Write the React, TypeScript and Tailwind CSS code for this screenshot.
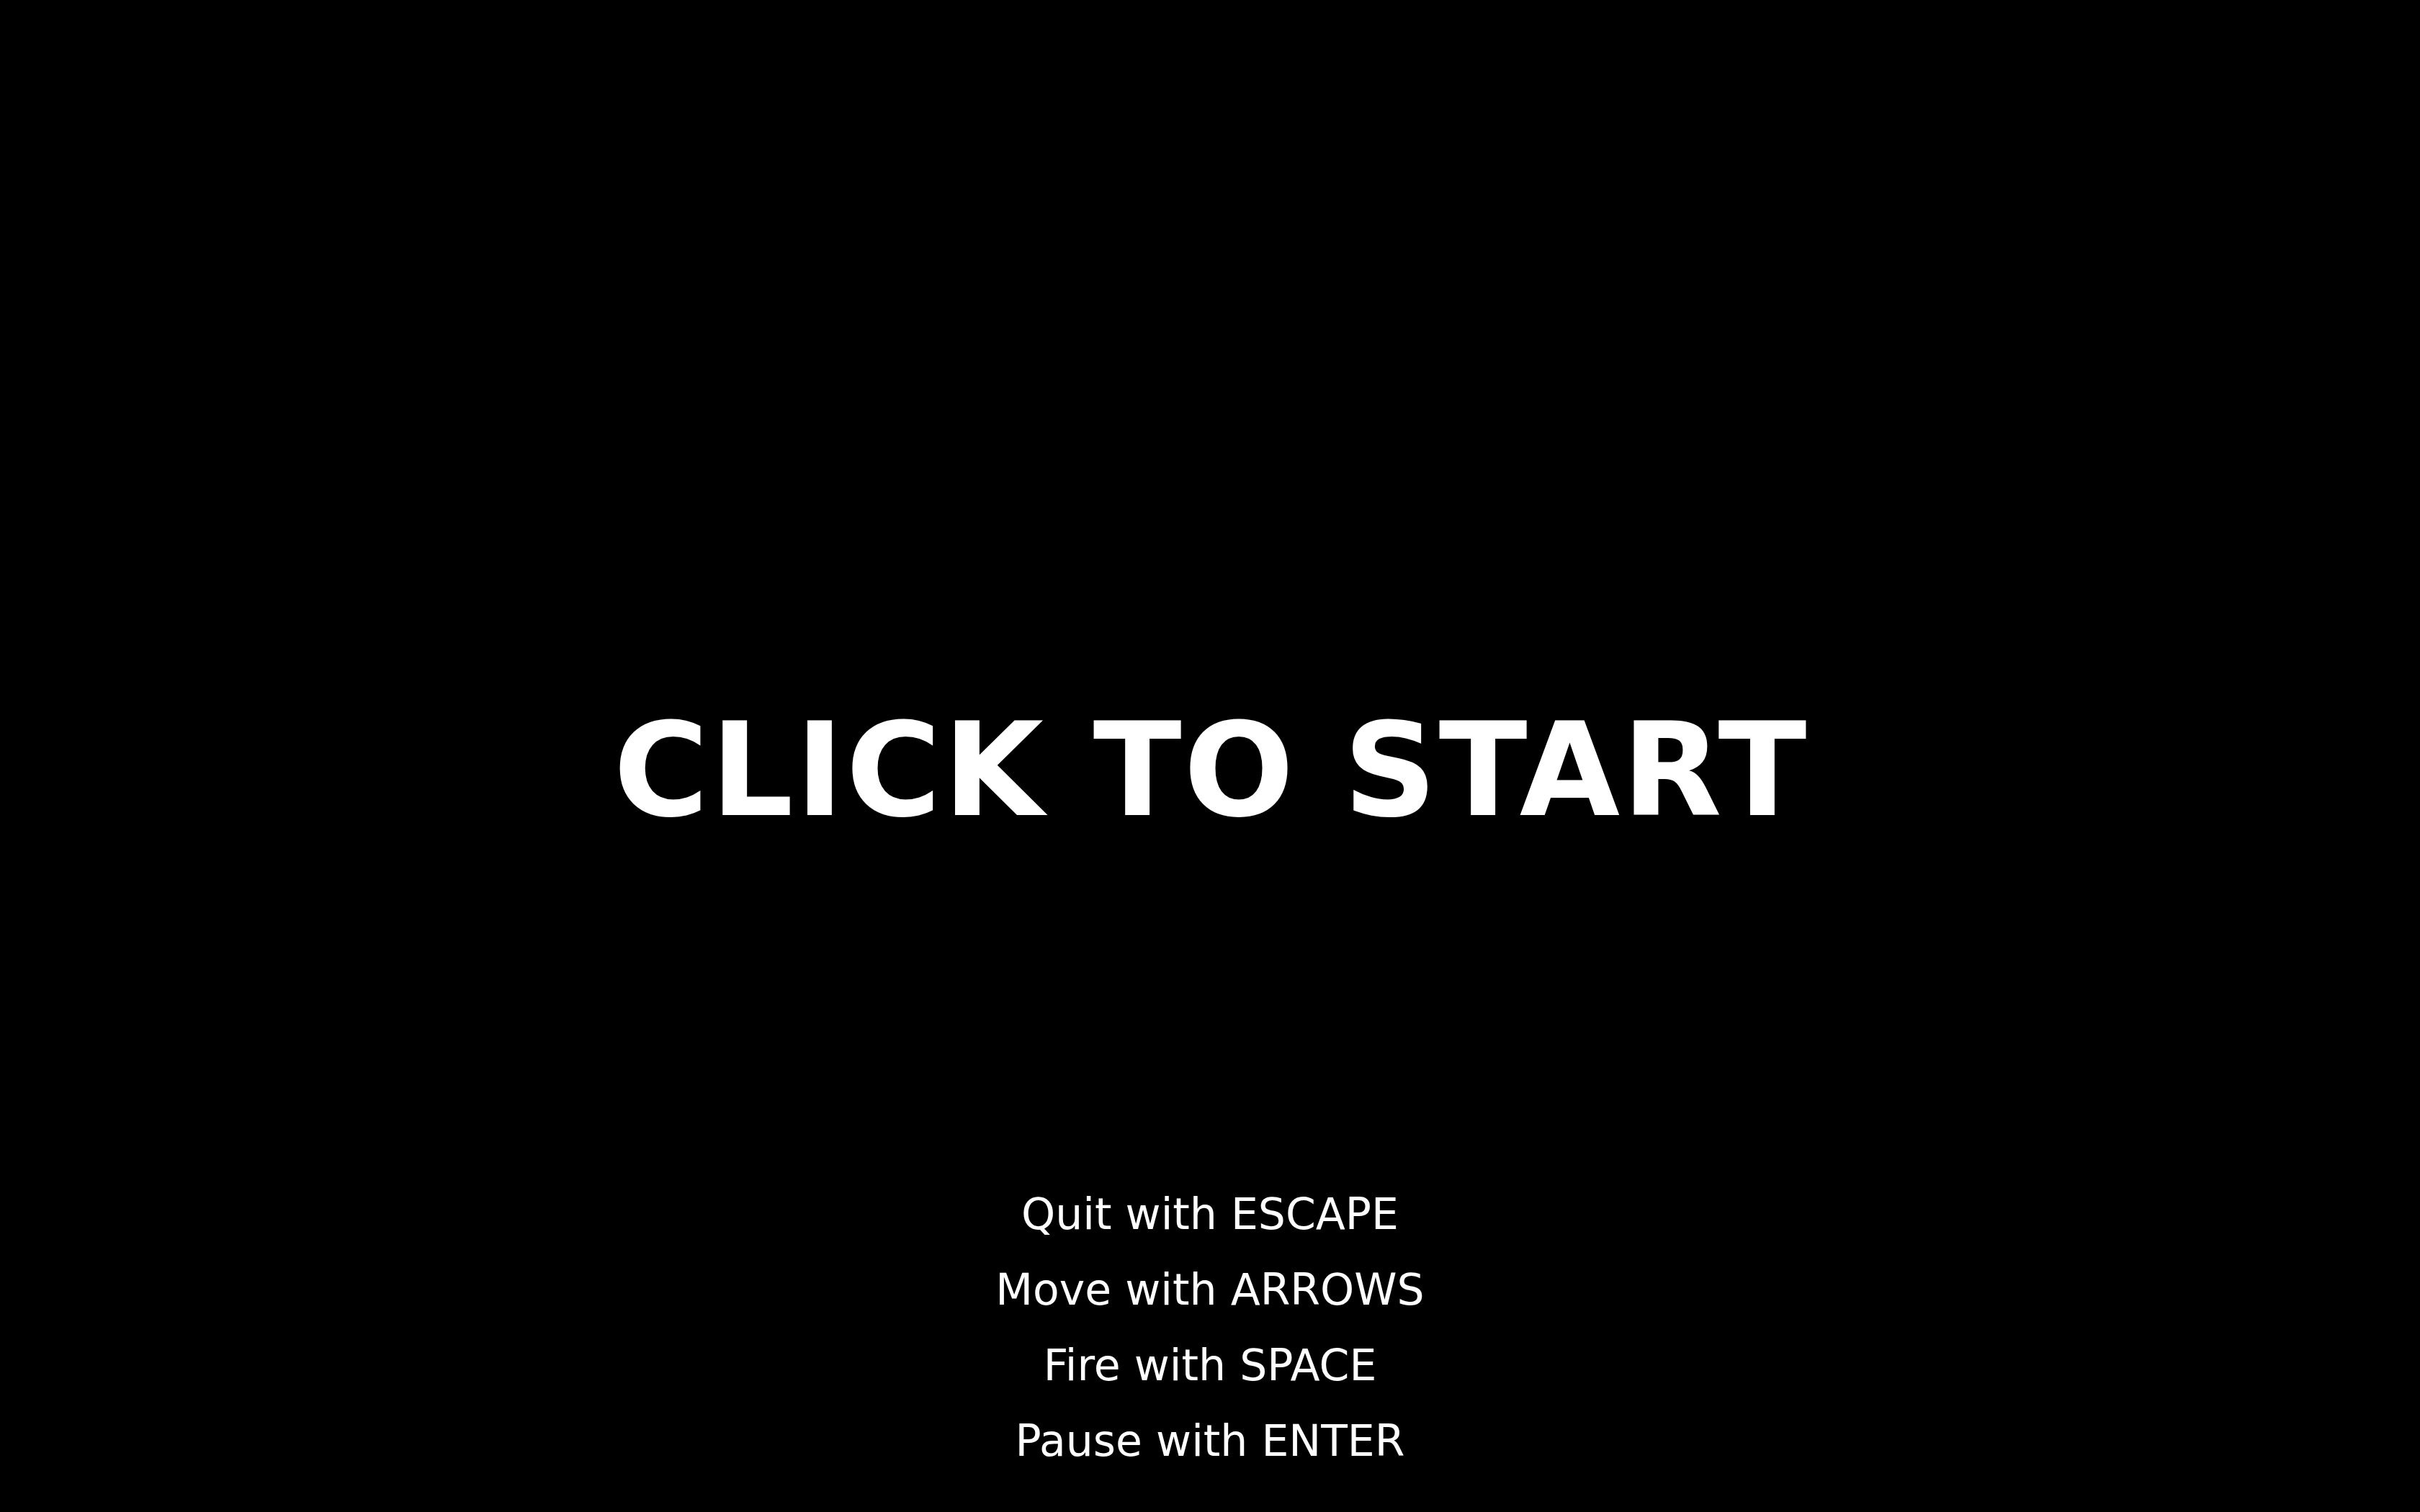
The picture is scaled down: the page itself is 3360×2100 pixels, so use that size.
import React from "react";

const controls = [
  "Quit with ESCAPE",
  "Move with ARROWS",
  "Fire with SPACE",
  "Pause with ENTER",
];

export default function App() {
  return (
    <div className="flex min-h-screen w-full flex-col items-center bg-black pt-[965px] text-white [font-family:'DejaVu_Sans',Verdana,sans-serif]">
      <h1 className="pl-[3px] text-[180px] font-bold leading-[normal] tracking-[3px] whitespace-nowrap">
        CLICK TO START
      </h1>
      <ul className="mt-[460px] flex flex-col items-center text-[60px] leading-[105px]">
        {controls.map((c) => (
          <li key={c} className="whitespace-nowrap">
            {c}
          </li>
        ))}
      </ul>
    </div>
  );
}
